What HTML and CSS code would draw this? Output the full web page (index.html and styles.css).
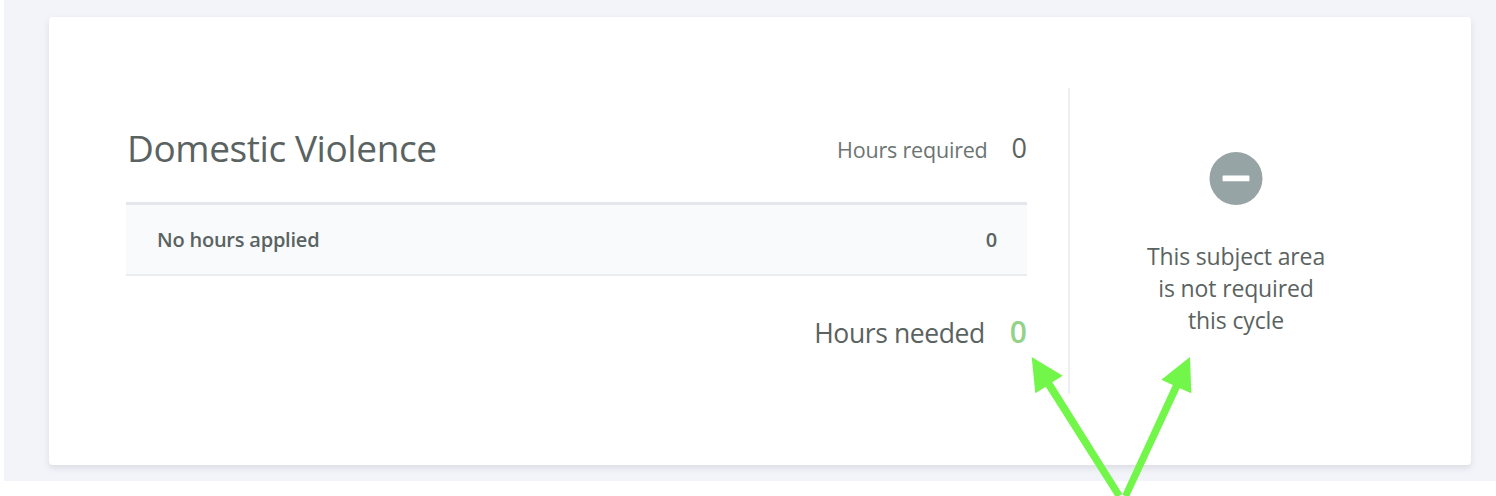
FILE: index.html
```html
<!DOCTYPE html>
<html lang="en">
<head>
<meta charset="utf-8">
<title>Domestic Violence</title>
<link rel="stylesheet" href="styles.css">
</head>
<body>
<main class="page">
  <section class="card">
    <div class="summary">
      <header class="summary-head">
        <h2 class="title">Domestic Violence</h2>
        <div class="required"><span class="required-label">Hours required</span><span class="required-value">0</span></div>
      </header>
      <div class="applied"><span>No hours applied</span><span>0</span></div>
      <div class="needed"><span class="needed-label">Hours needed</span><span class="needed-value">0</span></div>
    </div>
    <aside class="status">
      <svg class="status-icon" viewBox="0 0 54 54" aria-hidden="true">
        <circle cx="27" cy="27.4" r="26.5" fill="#97a4a5"/>
        <rect x="13.6" y="24.4" width="26.8" height="5.8" rx=".5" fill="#fff"/>
      </svg>
      <p class="status-text"><span>This subject area</span><span>is not required</span><span>this cycle</span></p>
    </aside>
  </section>
</main>
<svg class="arrows" viewBox="0 0 220 156" aria-hidden="true">
  <g fill="#71f649">
    <path d="M21.7 17 52.7 35.7 42.3 42.2 112.3 154 109 156H105L35.8 46.8 25.3 53.3Z"/>
    <path d="M180 17 181.3 53.3 169.7 48.3 119.5 156H115L112.3 154.7 162.8 45 151.3 39.7Z"/>
  </g>
</svg>
</body>
</html>
```

FILE: styles.css
```css
* { box-sizing: border-box; }

body {
  margin: 0;
  height: 496px;
  overflow: hidden;
  background: #fff;
  color: #5a6361;
  font-family: "Open Sans", "Noto Sans", sans-serif;
}

.page {
  height: 481px;
  margin-left: 4px;
  padding: 17px 25px 16px 45px;
  background: #f3f4f9;
}

.card {
  display: flex;
  height: 448px;
  padding: 71px 69px 71px 77px;
  border-radius: 4px;
  background: #fff;
  box-shadow: 0 3px 6px rgba(50, 55, 70, .12);
}

.summary { width: 901px; margin-right: 41px; }

.summary-head {
  display: flex;
  justify-content: space-between;
  align-items: flex-start;
  height: 114px;
  padding-top: 35px;
}

.title {
  margin: 0;
  padding-left: 1px;
  font-size: 37px;
  line-height: 50px;
  font-weight: 400;
  letter-spacing: -.41px;
}

.required { display: flex; align-items: baseline; gap: 24px; line-height: 50px; }
.required-label { font-size: 21.5px; letter-spacing: -.2px; color: #6c7472; }
.required-value { font-size: 27px; }

.applied {
  display: flex;
  justify-content: space-between;
  align-items: center;
  height: 74px;
  padding: 0 30px 0 31px;
  border-top: 3px solid #e5e6eb;
  border-bottom: 2px solid #ebecf1;
  background: #f9fafc;
  font-size: 20px;
  font-weight: 600;
  letter-spacing: -.22px;
}

.needed {
  display: flex;
  justify-content: flex-end;
  align-items: baseline;
  gap: 25px;
  padding-top: 35px;
  line-height: 42px;
}
.needed-label { font-size: 26.5px; letter-spacing: -.4px; }
.needed-value { font-size: 30px; font-weight: 600; color: #94d28a; }

.status {
  display: flex;
  flex: 1;
  flex-direction: column;
  align-items: center;
  padding-top: 63px;
  border-left: 2px solid #eeeef3;
}
.status-icon { width: 54px; height: 54px; }
.status-text {
  display: flex;
  flex-direction: column;
  margin: 35px 0 0;
  font-size: 23px;
  line-height: 32px;
  letter-spacing: -.14px;
  text-align: center;
}

/* Annotation arrows lie over the card. */
.arrows {
  position: absolute;
  left: 1010px;
  top: 340px;
  width: 220px;
  height: 156px;
}
```
